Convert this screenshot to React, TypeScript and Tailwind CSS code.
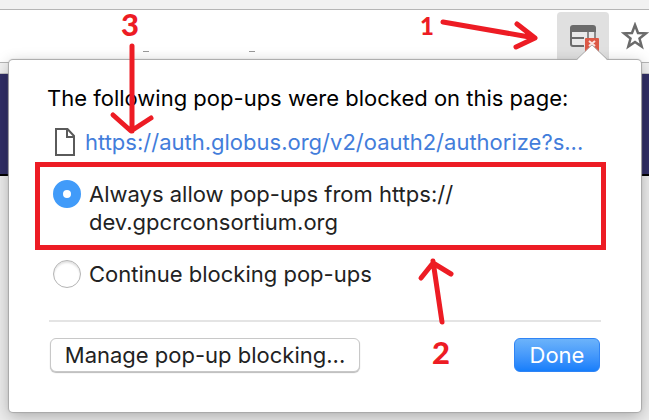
import React from "react";

function BlockedWindowIcon() {
  return (
    <svg viewBox="0 0 52 48" className="block h-12 w-[52px]" aria-hidden="true">
      <path d="M16 13h20a3 3 0 0 1 3 3v18H16a3 3 0 0 1-3-3V16a3 3 0 0 1 3-3z" fill="#e9e9e9" />
      <path d="M16 13h20a3 3 0 0 1 3 3v4H13v-4a3 3 0 0 1 3-3z" fill="#6b6b6b" />
      <path d="M14 18v14a2 2 0 0 0 2 2H27M15 26h12" fill="none" stroke="#6b6b6b" strokeWidth="2" />
      <path d="M31 20v6M38 20v6" fill="none" stroke="#8a8a8a" strokeWidth="2" />
      <rect x="28" y="26" width="14" height="14" rx="1" fill="#dc5946" />
      <path d="M32 29l6 5M38 29l-6 5" stroke="#fbe4e1" strokeWidth="2" />
    </svg>
  );
}

function StarIcon() {
  return (
    <svg viewBox="0 0 28 28" className="block h-7 w-7" aria-hidden="true">
      <path
        d="M14 3l3 8 8 .3-6.500 5.200 2.200 8-6.700-4.500-6.700 4.500 2.200-8L3 11.300l8-.3z"
        fill="none"
        stroke="#6b6b6b"
        strokeWidth="2.500"
      />
    </svg>
  );
}

function FileIcon() {
  return (
    <svg viewBox="0 0 20 28" className="block h-7 w-5 shrink-0" aria-hidden="true">
      <path d="M1 1h11.500L19 8v19H1z" fill="#fff" stroke="#5a5a5a" strokeWidth="2" />
      <path d="M12 1v8h7" fill="none" stroke="#5a5a5a" strokeWidth="2" />
    </svg>
  );
}

const radioClass =
  "m-0 h-7 w-7 shrink-0 appearance-none rounded-full border border-[#b4b4b4] bg-white shadow-[inset_0_2px_2px_#e2e2e2] checked:border-[10px] checked:border-[#419bf9] checked:shadow-none";

function Annotations() {
  return (
    <div className="pointer-events-none absolute inset-0 font-[Lato,sans-serif] font-black text-[#ed1c24]">
      <div className="absolute top-[162px] right-[43px] left-[35px] h-[88px] border-[5px] border-[#ed1c24]" />
      <svg
        className="absolute top-0 left-0 h-[420px] w-[649px]"
        viewBox="0 0 649 420"
        fill="none"
        stroke="#ed1c24"
        strokeWidth="5"
        strokeLinecap="round"
        strokeLinejoin="round"
        aria-hidden="true"
      >
        <path d="M132 46V131M113 115l18 16 20-13" />
        <path d="M443 22l92 16M517 24l18 14-19 9" />
        <path d="M442 322l-9-61M421 278l12-15 18 11" />
      </svg>
      <span className="absolute top-1 left-[121px] text-[31px] leading-10">3</span>
      <span className="absolute top-1.5 left-[420px] text-[24px] leading-10">1</span>
      <span className="absolute top-[332px] left-[432px] text-[31px] leading-10">2</span>
    </div>
  );
}

export default function App() {
  return (
    <div className="relative flex h-screen min-h-[420px] flex-col overflow-hidden bg-[#ececec] font-[Inter,sans-serif] text-[22px] leading-7">
      <div className="h-2.5 shrink-0 border-b border-[#b5b5b5] bg-[#f1f1f1]" />
      <div className="flex h-[53px] shrink-0 items-start justify-end gap-3 border-b border-[#b5b5b5] bg-white pt-0.5">
        <div className="flex grow gap-[100px] self-end pb-2.5 pl-[143px]">
          <i className="h-px w-1.5 bg-[#999]" />
          <i className="h-px w-1.5 bg-[#999]" />
        </div>
        <button type="button" aria-label="Pop-ups blocked" className="rounded-t bg-[#e0e0e0]">
          <BlockedWindowIcon />
        </button>
        <button type="button" aria-label="Bookmark this page" className="pt-2.5">
          <StarIcon />
        </button>
      </div>
      <div className="h-[11px] shrink-0 border-b border-[#c4c4c4] bg-[#f1f1f1]" />
      <div className="h-[102px] shrink-0 border-b-2 border-black bg-[#312f66]" />

      <section
        aria-label="Blocked pop-ups"
        className="absolute top-[60px] right-2 left-[9px] rounded-[4px] bg-white pt-6 pr-10 pb-10 pl-[38px] shadow-[0_0_1px_1px_#a8a8a8,0_4px_16px_#00000048]"
      >
        <svg viewBox="0 0 32 17" className="absolute -top-4 right-[33px] h-[17px] w-8" aria-hidden="true">
          <path d="M0 17L16 1l16 16z" fill="#fff" />
          <path d="M0 16L16 1l16 15" fill="none" stroke="#b0b0b0" strokeWidth="1" />
        </svg>
        <h1 className="whitespace-nowrap text-black">The following pop-ups were blocked on this page:</h1>
        <div className="mt-4 flex items-center gap-2.5 pl-2">
          <FileIcon />
          <a href="#popup" className="whitespace-nowrap text-[#437ddb]">
            https://auth.globus.org/v2/oauth2/authorize?s...
          </a>
        </div>
        <form className="pl-0.5">
          <label className="mt-6 flex items-start gap-2 pl-1 text-[#222]">
            <input type="radio" name="popups" defaultChecked className={radioClass} />
            <span>
              Always allow pop-ups from https://
              <br />
              dev.gpcrconsortium.org
            </span>
          </label>
          <label className="mt-6 flex items-start gap-2 pl-1 text-[#222]">
            <input type="radio" name="popups" className={radioClass} />
            <span>Continue blocking pop-ups</span>
          </label>
          <div className="mt-8 border-t-2 border-[#e4e4e4]" />
          <div className="mt-4 flex justify-between px-px">
            <button
              type="button"
              className="h-[34px] w-[310px] rounded-md border border-[#c8c8c8] bg-white whitespace-nowrap text-[#222] shadow-[0_1px_1px_#bbb]"
            >
              Manage pop-up blocking...
            </button>
            <button
              type="button"
              className="h-[34px] w-[86px] rounded-md border border-[#2f84f5] bg-linear-to-b from-[#6cb3fa] to-[#157efb] text-white"
            >
              Done
            </button>
          </div>
        </form>
      </section>
      <Annotations />
    </div>
  );
}
